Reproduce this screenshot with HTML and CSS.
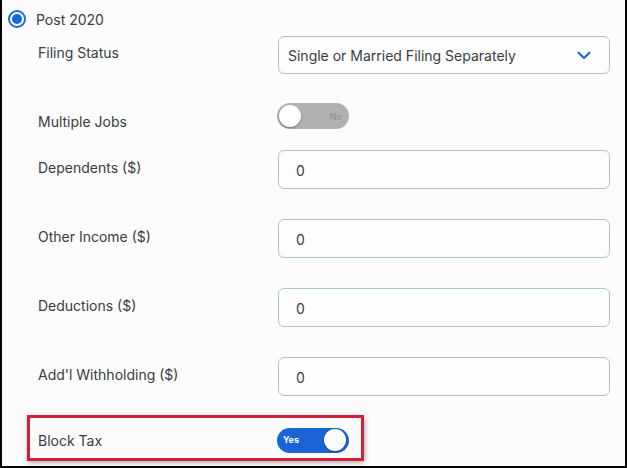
FILE: index.html
```html
<!DOCTYPE html>
<html>
<head>
<meta charset="utf-8">
<link rel="stylesheet" href="styles.css">
</head>
<body>
<div class="page">
  <div class="radio-row">
    <span class="radio"><span class="dot"></span></span>
    <span class="radio-label">Post 2020</span>
  </div>

  <div class="row row-filing">
    <div class="label lbl-up3">Filing Status</div>
    <div class="select">
      <span>Single or Married Filing Separately</span>
      <svg class="chev" width="14" height="9" viewBox="0 0 14 9"><path d="M1.5 1.8 L7 7 L12.5 1.8" fill="none" stroke="#1a66dc" stroke-width="2.2" stroke-linecap="round" stroke-linejoin="round"/></svg>
    </div>
  </div>

  <div class="row row-jobs">
    <div class="label lbl-down5">Multiple Jobs</div>
    <div class="toggle off"><span class="knob"></span><span class="ttext">No</span></div>
  </div>

  <div class="row row-input first">
    <div class="label lbl-up2">Dependents ($)</div>
    <div class="input">0</div>
  </div>
  <div class="row row-input">
    <div class="label lbl-up2">Other Income ($)</div>
    <div class="input">0</div>
  </div>
  <div class="row row-input">
    <div class="label lbl-up2">Deductions ($)</div>
    <div class="input">0</div>
  </div>
  <div class="row row-input">
    <div class="label lbl-up2">Add'l Withholding ($)</div>
    <div class="input">0</div>
  </div>

  <div class="highlight">
    <div class="label hl-label">Block Tax</div>
    <div class="toggle on"><span class="ttext">Yes</span><span class="knob"></span></div>
  </div>
</div>
</body>
</html>
```
FILE: styles.css
```css
* { box-sizing: border-box; }
html, body { margin: 0; padding: 0; }
body {
  width: 627px;
  height: 468px;
  background: #fcfcfc;
  font-family: Inter, "Noto Sans", sans-serif;
  color: #383d44;
  font-size: 14px;
  overflow: hidden;
}
.page {
  width: 627px;
  height: 468px;
  border-left: 2px solid #000;
  border-right: 2px solid #000;
  border-bottom: 2px solid #000;
  padding-top: 8px;
}
.radio-row {
  display: flex;
  align-items: center;
  height: 22px;
  padding-left: 6px;
}
.radio {
  width: 18px;
  height: 18px;
  border-radius: 50%;
  border: 2px solid #1a6be0;
  display: flex;
  align-items: center;
  justify-content: center;
  background: #fff;
}
.dot {
  width: 10px;
  height: 10px;
  border-radius: 50%;
  background: #1a66dc;
}
.radio-label { margin-left: 10px; }

.row {
  display: flex;
  align-items: center;
  padding-left: 36px;
}
.label { width: 240px; flex: none; }
.lbl-up3 { margin-top: -6px; }
.lbl-up2 { margin-top: -5px; }
.lbl-down5 { margin-top: 10px; }

.row-filing { margin-top: 6px; height: 38px; }
.select {
  width: 332px;
  height: 38px;
  border: 1px solid #aac3da;
  border-radius: 6px;
  background: #fdfdfd;
  display: flex;
  align-items: center;
  justify-content: space-between;
  padding: 0 18px 0 9px;
}
.select span { font-size: 14px; }
.chev { display: block; margin-top: 1px; }

.row-jobs { margin-top: 29px; height: 26px; }
.row-input { margin-top: 30px; height: 39px; }
.row-input.first { margin-top: 21px; }
.input {
  width: 332px;
  height: 39px;
  border: 1px solid #aac3da;
  border-radius: 6px;
  background: #fdfdfd;
  display: flex;
  align-items: center;
  padding-left: 17px;
  padding-top: 2px;
}

.toggle {
  width: 72px;
  height: 26px;
  border-radius: 13px;
  display: flex;
  align-items: center;
  justify-content: space-between;
  padding: 0 2px;
  margin-left: -1px;
}
.toggle .knob {
  width: 22px;
  height: 22px;
  border-radius: 50%;
  background: #fff;
  box-shadow: 0 1px 2px rgba(0,0,0,0.35);
}
.toggle .ttext { font-size: 9px; }
.toggle.off { background: #b0b1b1; }
.toggle.off .ttext { color: #8b8d8d; margin-right: 5px; }
.toggle.on { background: #1a64d6; height: 25px; padding: 0 3px 0 2px; }
.toggle.on .ttext { color: #fff; font-weight: 700; margin-left: 4px; margin-top: -2px; }

.highlight {
  margin-top: 19px;
  margin-left: 25px;
  width: 337px;
  height: 46px;
  border: 3px solid #d31f3a;
  box-shadow: 1px 2px 5px rgba(0,0,0,0.3);
  display: flex;
  align-items: center;
  padding-left: 8px;
  padding-top: 4px;
}
.hl-label { width: 240px; margin-top: 1px; }
```
